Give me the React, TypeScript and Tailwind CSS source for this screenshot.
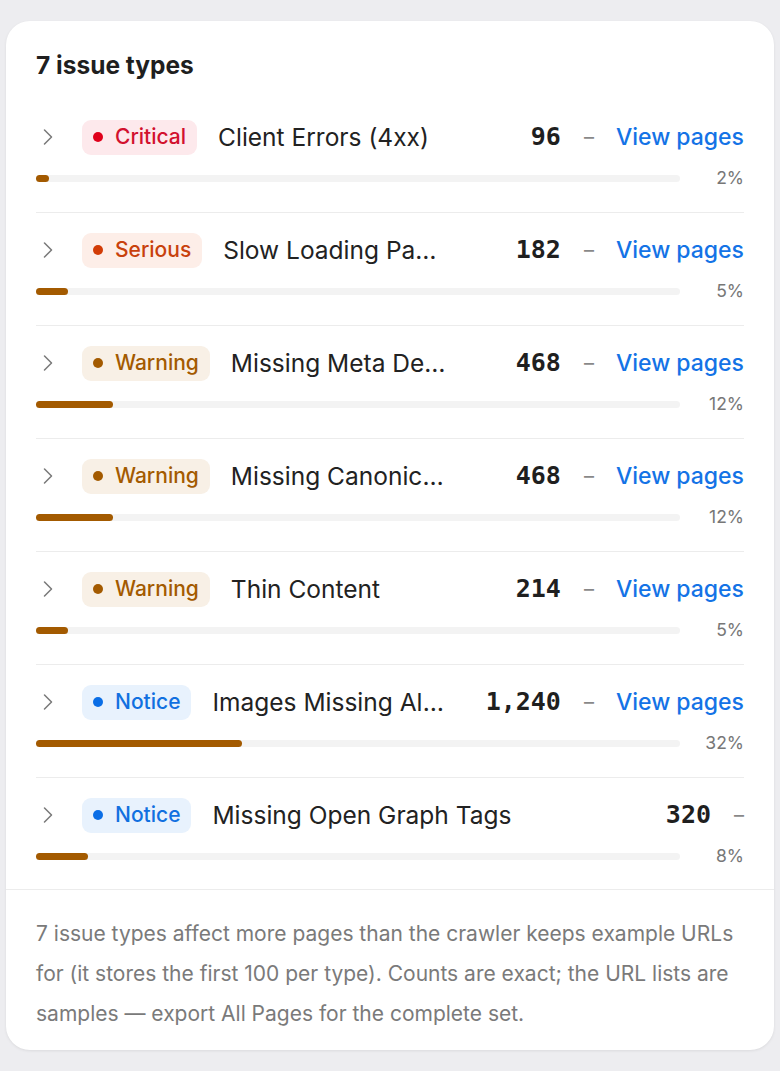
import { ChevronRight } from 'lucide-react';

type Severity = 'Critical' | 'Serious' | 'Warning' | 'Notice';

const badgeStyles: Record<Severity, { box: string; dot: string }> = {
  Critical: { box: 'bg-[#fde9ec] text-[#d2112e]', dot: 'bg-[#e0001b]' },
  Serious: { box: 'bg-[#fdeee8] text-[#c8410c]', dot: 'bg-[#d23c06]' },
  Warning: { box: 'bg-[#f8f0e6] text-[#a35a00]', dot: 'bg-[#a35a00]' },
  Notice: { box: 'bg-[#e8f2fd] text-[#1170e0]', dot: 'bg-[#0a6ee6]' },
};

const issues: { severity: Severity; title: string; count: string; pct: number; link: boolean }[] = [
  { severity: 'Critical', title: 'Client Errors (4xx)', count: '96', pct: 2, link: true },
  { severity: 'Serious', title: 'Slow Loading Pages', count: '182', pct: 5, link: true },
  { severity: 'Warning', title: 'Missing Meta Descriptions', count: '468', pct: 12, link: true },
  { severity: 'Warning', title: 'Missing Canonical Tags', count: '468', pct: 12, link: true },
  { severity: 'Warning', title: 'Thin Content', count: '214', pct: 5, link: true },
  { severity: 'Notice', title: 'Images Missing Alt Text', count: '1,240', pct: 32, link: true },
  { severity: 'Notice', title: 'Missing Open Graph Tags', count: '320', pct: 8, link: false },
];

export default function App() {
  return (
    <div
      className="min-h-[1071px] bg-[#ededf0] px-[6px] pt-[21px] pb-[21px]"
      style={{ fontFamily: 'Inter, "Noto Sans", sans-serif' }}
    >
      <section className="bg-white rounded-[24px] shadow-[0_1px_3px_rgba(0,0,0,0.08)] overflow-hidden">
        <div className="px-[30px] pt-[28px]">
          <h2 className="text-[24.5px] leading-[32px] font-bold text-[#1f1f1f] mb-[19px]">7 issue types</h2>

          {issues.map((issue, index) => {
            const badge = badgeStyles[issue.severity];
            return (
              <div
                key={index}
                className={`pt-[17px] ${index < issues.length - 1 ? 'pb-[24px] border-b border-[#ececec]' : 'pb-[23px]'}`}
              >
                <div className="flex items-center h-[40px]">
                  <ChevronRight className="w-[28px] h-[28px] text-[#7a7a7a] -ml-[2px] mr-[20px] shrink-0" strokeWidth={1.3} />
                  <span
                    className={`flex items-center gap-[12px] h-[35px] pl-[11px] pr-[11px] rounded-[9px] text-[21px] font-medium shrink-0 ${badge.box}`}
                  >
                    <span className={`w-[10px] h-[10px] rounded-full ${badge.dot}`} />
                    {issue.severity}
                  </span>
                  <span className="ml-[21px] flex-1 min-w-0 truncate text-[24.5px] text-[#222]">{issue.title}</span>
                  <span
                    className="w-[115px] text-right text-[25px] font-bold text-[#1f1f1f] shrink-0"
                    style={{ fontFamily: '"DejaVu Sans Mono", monospace' }}
                  >
                    {issue.count}
                  </span>
                  <span className="ml-[23px] text-[20px] text-[#888] shrink-0">–</span>
                  {issue.link && (
                    <a className="ml-[22px] text-[23px] font-medium text-[#1473e6] shrink-0">View pages</a>
                  )}
                </div>
                <div className="flex items-center h-[20px] mt-[11px]">
                  <div className="flex-1 h-[7px] rounded-full bg-[#f3f3f3]">
                    <div className="h-full rounded-full bg-[#a35a00]" style={{ width: `${issue.pct}%` }} />
                  </div>
                  <span className="w-[64px] text-right text-[17.5px] text-[#777]">{issue.pct}%</span>
                </div>
              </div>
            );
          })}
        </div>

        <div className="border-t border-[#ececec] px-[30px] pt-[24px] pb-[16px]">
          <p className="text-[21px] leading-[40px] text-[#7a7a7a]">
            7 issue types affect more pages than the crawler keeps example URLs for (it stores the first 100 per type).
            Counts are exact; the URL lists are samples — export All Pages for the complete set.
          </p>
        </div>
      </section>
    </div>
  );
}
